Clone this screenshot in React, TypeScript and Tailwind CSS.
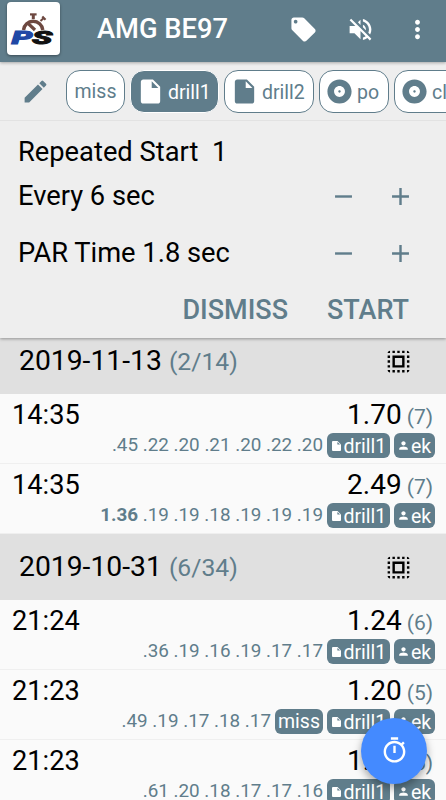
import React from 'react';
import {
    MdAdd,
    MdAlbum,
    MdEdit,
    MdInsertDriveFile,
    MdLocalOffer,
    MdMoreVert,
    MdPerson,
    MdRemove,
    MdSelectAll,
    MdVolumeOff,
} from 'react-icons/md';

interface Shot {
    time: string;
    total: string;
    count: number;
    first?: string;
    splits: string;
    miss?: boolean;
}

interface Day {
    date: string;
    summary: string;
    shots: Shot[];
}

const DAYS: Day[] = [
    {
        date: '2019-11-13',
        summary: '(2/14)',
        shots: [
            { time: '14:35', total: '1.70', count: 7, splits: '.45 .22 .20 .21 .20 .22 .20' },
            { time: '14:35', total: '2.49', count: 7, first: '1.36', splits: '.19 .19 .18 .19 .19 .19' },
        ],
    },
    {
        date: '2019-10-31',
        summary: '(6/34)',
        shots: [
            { time: '21:24', total: '1.24', count: 6, splits: '.36 .19 .16 .19 .17 .17' },
            { time: '21:23', total: '1.20', count: 5, splits: '.49 .19 .17 .18 .17', miss: true },
            { time: '21:23', total: '1.22', count: 6, splits: '.61 .20 .18 .17 .17 .16' },
        ],
    },
];

const Logo = () => (
    <div className="ml-[7px] h-[53px] w-[53px] shrink-0 rounded-[4px] bg-white shadow-[0_1px_3px_rgba(0,0,0,0.4)]">
        <svg viewBox="0 0 53 53" className="h-full w-full">
            <g fill="none" stroke="#6d4840">
                <path d="M16.5 28 A9.7 9.7 0 0 1 35.8 28" strokeWidth="3.4" />
                <path d="M23 12.4h6.6" strokeWidth="2.2" />
                <path d="M26.3 13v4" strokeWidth="3" />
                <path d="M33.5 19l3-2.8" strokeWidth="2" />
                <path d="M35.3 14.4l3.2 3.4" strokeWidth="2.2" />
                <path d="M20.5 20.8l7.5 7.2" strokeWidth="3.2" />
            </g>
            <g fontFamily="Roboto" fontWeight="900" fontStyle="italic" fontSize="18" strokeWidth="0.9">
                <text transform="translate(4.6 41.8) scale(1.85 1)" fill="#2148a5" stroke="#2148a5">P</text>
                <text transform="translate(25 41.8) scale(1.85 1)" fill="#111" stroke="#111">S</text>
            </g>
        </svg>
    </div>
);

const Header = () => (
    <header className="relative z-20 flex h-[62px] shrink-0 items-start bg-[#607d8b] pt-[2px] text-white shadow-[0_1px_3px_rgba(0,0,0,0.3)]">
        <Logo />
        <h1 className="ml-[37px] flex-1 pt-px text-[27.3px] leading-[53px] font-medium whitespace-nowrap">AMG BE97</h1>
        <div className="mr-[14px] flex h-[54px] items-center gap-[28px]">
            <MdLocalOffer size={29} />
            <MdVolumeOff size={29} />
            <MdMoreVert size={29} />
        </div>
    </header>
);

const CHIP = 'flex h-[43px] shrink-0 items-center rounded-[14px] border text-[19.5px] ';

const Chips = () => (
    <div className="flex h-[59px] items-center gap-[5px] overflow-hidden border-b border-[#e2e2e2] pt-px pl-[21px] text-[#607d8b]">
        <MdEdit size={29} className="mr-[11px] shrink-0" />
        <div className={CHIP + 'w-[59px] justify-center border-[#607d8b] bg-white pt-px'}>miss</div>
        <div className={CHIP + 'w-[89px] border-white bg-[#607d8b] pl-[5px] text-white'}>
            <MdInsertDriveFile size={29} className="mr-[3px]" />
            <span className="pt-[2px]">drill1</span>
        </div>
        <div className={CHIP + 'w-[90px] border-[#607d8b] bg-white pl-[5px]'}>
            <MdInsertDriveFile size={29} className="mr-[3px]" />
            <span className="pt-[2px]">drill2</span>
        </div>
        <div className={CHIP + 'w-[70px] border-[#607d8b] bg-white pl-[5px]'}>
            <MdAlbum size={29} className="mr-[3px]" />
            <span className="pt-[2px]">po</span>
        </div>
        <div className={CHIP + 'w-[90px] border-[#607d8b] bg-white pl-[5px]'}>
            <MdAlbum size={29} className="mr-[3px]" />
            <span className="pt-[2px]">cl</span>
        </div>
    </div>
);

const Stepper = () => (
    <div className="mr-[31.5px] flex gap-[28px] text-[#607d8b]">
        <MdRemove size={29} />
        <MdAdd size={29} />
    </div>
);

const SettingsPanel = () => (
    <section className="relative z-10 h-[276px] shrink-0 bg-[#eee] shadow-[0_1px_3px_rgba(0,0,0,0.35)]">
        <Chips />
        <div className="pt-[10px] pl-[18px] text-[27.3px]">
            <div className="flex h-[40px] items-center pt-[2px] whitespace-pre">{'Repeated Start  1'}</div>
            <div className="flex h-[50px] items-center justify-between">
                Every 6 sec
                <Stepper />
            </div>
            <div className="flex h-[64px] items-center justify-between">
                PAR Time 1.8 sec
                <Stepper />
            </div>
            <div className="flex h-[50px] items-center justify-end gap-[39px] pr-[37px] text-[27px] font-medium text-[#607d8b]">
                <button>DISMISS</button>
                <button>START</button>
            </div>
        </div>
    </section>
);

const FileGlyph = () => (
    <svg viewBox="0 0 9 10" className="mr-[2.5px] h-[10px] w-[9px] shrink-0" fill="currentColor">
        <path d="M1 0h4.5L9 3.5V9a1 1 0 0 1-1 1H1a1 1 0 0 1-1-1V1a1 1 0 0 1 1-1z" />
        <path d="M5.4 .9v2.7h2.7z" fill="#607d8b" />
    </svg>
);

const BADGE = 'flex h-[25px] items-center rounded-[6px] bg-[#607d8b] text-[19.5px] leading-[25px] text-white ';

const ShotRow = ({ shot }: { shot: Shot }) => (
    <div className="h-[70px] border-b border-[#efefef] pt-[3px]">
        <div className="flex h-[36px] items-baseline pr-[13px] pl-[12px] leading-[36px]">
            <span className="flex-1 text-[27.2px]">{shot.time}</span>
            <span className="text-[28px]">{shot.total}</span>
            <span className="ml-[5px] text-[21px] text-[#607d8b]">({shot.count})</span>
        </div>
        <div className="flex items-center justify-end gap-[4px] pr-[11px]">
            <span className="text-[18.85px] leading-[23px] text-[#607d8b]">
                {shot.first && <b className="font-bold">{shot.first} </b>}
                {shot.splits}
            </span>
            {shot.miss && <span className={BADGE + 'w-[48px] justify-center'}>miss</span>}
            <span className={BADGE + 'w-[63px] pl-[5px]'}>
                <FileGlyph />
                <span className="pt-px">drill1</span>
            </span>
            <span className={BADGE + 'w-[41px] pl-[3px]'}>
                <MdPerson size={13} className="mr-[1px] shrink-0" />
                <span className="pt-px">ek</span>
            </span>
        </div>
    </div>
);

const DayHeader = ({ day }: { day: Day }) => (
    <div className="flex h-[66px] items-center justify-between bg-[#e0e0e0] pr-[33px] pl-[19px]">
        <div className="pt-px text-[28.3px]">
            {day.date} <span className="text-[24.7px] text-[#607d8b]">{day.summary}</span>
        </div>
        <MdSelectAll size={29} />
    </div>
);

const TimerButton = () => (
    <button className="absolute top-[717.5px] left-[361px] z-30 flex h-[66px] w-[66px] items-center justify-center rounded-full bg-[#448aff] text-white shadow-[0_4px_8px_rgba(0,0,0,0.35)]">
        <svg viewBox="0 0 24 24" className="h-[29px] w-[29px]" fill="currentColor">
            <path d="M15 1H9v2h6V1zm-4 13h2V8h-2v6zm8.03-6.61l1.42-1.42c-.43-.51-.9-.99-1.41-1.41l-1.42 1.42C16.07 4.74 14.12 4 12 4c-4.97 0-9 4.03-9 9s4.02 9 9 9 9-4.03 9-9c0-2.12-.74-4.07-1.97-5.61zM12 20c-3.87 0-7-3.13-7-7s3.13-7 7-7 7 3.13 7 7-3.13 7-7 7z" />
        </svg>
    </button>
);

export default function App() {
    return (
        <div className="relative flex h-[800px] w-[446px] flex-col overflow-hidden bg-[#fafafa] font-[Roboto,sans-serif] text-black">
            <Header />
            <SettingsPanel />
            {/* The list is scrolled a little under the panel */}
            <main className="-mt-[10px] min-h-0 flex-1 overflow-hidden">
                {DAYS.map((day) => (
                    <section key={day.date}>
                        <DayHeader day={day} />
                        {day.shots.map((shot, idx) => (
                            <ShotRow key={idx} shot={shot} />
                        ))}
                    </section>
                ))}
            </main>
            <TimerButton />
        </div>
    );
}
